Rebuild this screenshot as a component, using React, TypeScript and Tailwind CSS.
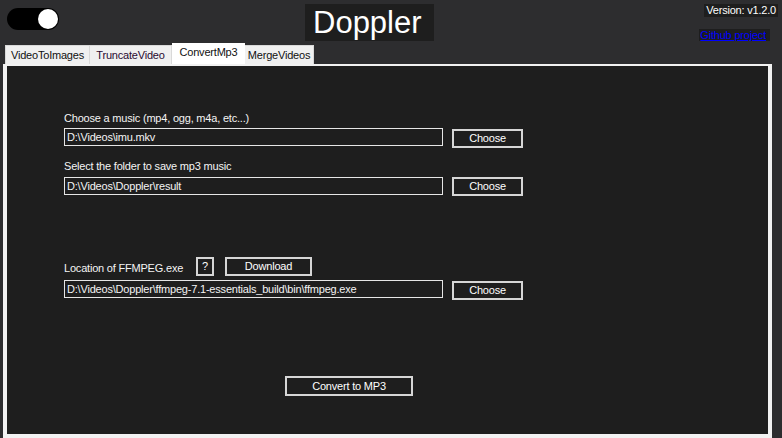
export default function App() {
  const font = { fontFamily: '"Liberation Sans", Arial, sans-serif' };
  return (
    <div
      className="w-[782px] h-[438px] bg-[#2d2d2f] overflow-hidden flex flex-col text-[11px] leading-[15px] tracking-[-0.2px]"
      style={font}
    >
      {/* header */}
      <div className="h-[43px] flex items-start shrink-0">
        <div className="ml-[7px] mt-[8px] w-[52px] h-[22px] rounded-full bg-black flex items-center justify-end pr-[1px]">
          <div className="w-[20px] h-[20px] rounded-full bg-white" />
        </div>
        <div className="ml-[246px] mt-[4px] w-[129px] h-[37px] bg-[#1e1e1e] text-white text-[31px] leading-[37px] tracking-normal pl-[8px]">
          Doppler
        </div>
        <div className="ml-auto mr-[4px] mt-[4px] flex flex-col items-end">
          <div className="bg-[#1e1e1e] text-white px-[2px] h-[13px] leading-[13px]">Version: v1.2.0</div>
          <a href="#" className="mt-[12px] mr-[8px] bg-[#1e1e1e] text-[#0000ff] underline h-[12px] leading-[12px] pl-[1px] pr-[4px]">
            Github project
          </a>
        </div>
      </div>

      {/* tabs */}
      <div className="h-[21px] pl-[5px] flex items-end shrink-0 text-[#111]">
        <div className="w-[85px] h-[19px] bg-[#f0f0f0] border border-[#d9d9d9] border-b-0 flex items-center justify-center">VideoToImages</div>
        <div className="w-[82px] h-[19px] bg-[#f0f0f0] border border-[#d9d9d9] border-b-0 border-l-0 flex items-center justify-center text-[#2a0a30]">TruncateVideo</div>
        <div className="w-[73px] h-[22px] bg-white flex items-start justify-center pt-[2px] -mb-[1px]">ConvertMp3</div>
        <div className="w-[69px] h-[19px] bg-[#f0f0f0] border border-[#d9d9d9] border-b-0 border-l-0 flex items-center justify-center">MergeVideos</div>
      </div>

      {/* panel */}
      <div className="ml-[3px] w-[769px] flex-1 border-[#f2f2f2] border-x-4 border-t-2 border-b-4 bg-[#1e1e1e] text-[#f4f4f4] pl-[57px] pt-[45px] flex flex-col">
        <div>Choose a music (mp4, ogg, m4a, etc...)</div>
        <div className="mt-[2px] flex items-start">
          <div className="w-[379px] h-[18px] border border-[#e6e6e6] pl-[2px] leading-[16px]">D:\Videos\imu.mkv</div>
          <button className="ml-[9px] mt-[1px] w-[71px] h-[19px] border-2 border-[#d6d6d6] bg-[#1e1e1e] text-white leading-[15px]">Choose</button>
        </div>

        <div className="mt-[11px]">Select the folder to save mp3 music</div>
        <div className="mt-[3px] flex items-start">
          <div className="w-[379px] h-[18px] border border-[#e6e6e6] pl-[2px] leading-[16px]">D:\Videos\Doppler\result</div>
          <button className="ml-[9px] w-[71px] h-[19px] border-2 border-[#d6d6d6] bg-[#1e1e1e] text-white leading-[15px]">Choose</button>
        </div>

        <div className="mt-[61px] flex items-center h-[19px]">
          <span className="w-[132px] pt-[3px]">Location of FFMPEG.exe</span>
          <button className="w-[18px] h-[19px] border-2 border-[#d6d6d6] bg-[#1e1e1e] text-white leading-[15px]">?</button>
          <button className="ml-[11px] w-[87px] h-[19px] border-2 border-[#d6d6d6] bg-[#1e1e1e] text-white leading-[15px]">Download</button>
        </div>
        <div className="mt-[4px] flex items-start">
          <div className="w-[379px] h-[18px] border border-[#e6e6e6] pl-[2px] leading-[16px]">D:\Videos\Doppler\ffmpeg-7.1-essentials_build\bin\ffmpeg.exe</div>
          <button className="ml-[9px] mt-[1px] w-[71px] h-[19px] border-2 border-[#d6d6d6] bg-[#1e1e1e] text-white leading-[15px]">Choose</button>
        </div>

        <div className="mt-[76px] pl-[221px]">
          <button className="w-[128px] h-[20px] border-2 border-[#d6d6d6] bg-[#1e1e1e] text-white leading-[16px]">Convert to MP3</button>
        </div>
      </div>
    </div>
  );
}
